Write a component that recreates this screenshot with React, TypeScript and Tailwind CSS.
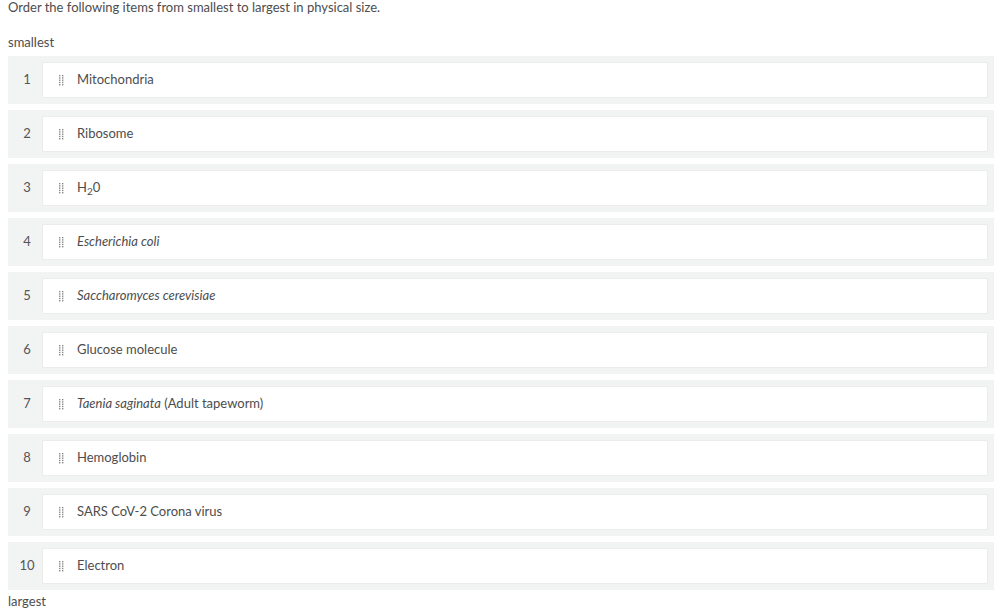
import React from "react";

const Handle = () => (
  <svg width="5" height="11" viewBox="0 0 5 11" className="shrink-0">
    {[0, 1, 2, 3, 4].map((r) =>
      [0, 1].map((c) => (
        <rect key={`${r}-${c}`} x={c * 3} y={r * 2.25} width="1.4" height="1.4" fill="#8a8a8a" />
      ))
    )}
  </svg>
);

const items: React.ReactNode[] = [
  "Mitochondria",
  "Ribosome",
  <span>H<sub className="text-[10px] align-baseline relative top-[3px]">2</sub>0</span>,
  <i>Escherichia coli</i>,
  <i>Saccharomyces cerevisiae</i>,
  "Glucose molecule",
  <span><i>Taenia saginata</i> (Adult tapeworm)</span>,
  "Hemoglobin",
  "SARS CoV-2 Corona virus",
  "Electron",
];

export default function App() {
  return (
    <div className="w-[1003px] h-[615px] bg-white text-[#4d4d4d] text-[13px] overflow-hidden" style={{ fontFamily: "Lato, 'Open Sans', sans-serif" }}>
      <div className="pl-[8px] pr-[9px]">
        <p className="leading-[16px] -mt-[1px]">Order the following items from smallest to largest in physical size.</p>
        <p className="leading-[16px] mt-[19px]">smallest</p>
        <div className="mt-[6px] flex flex-col gap-[6px]">
          {items.map((it, i) => (
            <div key={i} className="h-[48px] bg-[#f2f3f3] flex items-center pr-[6px]">
              <div className="w-[34px] pl-[4px] text-center text-[#555]">{i + 1}</div>
              <div className="flex-1 h-[36px] bg-white border border-[#ebebeb] rounded-[2px] flex items-center pl-[16px] gap-[13px]">
                <Handle />
                <span className="text-[#4d4d4d]">{it}</span>
              </div>
            </div>
          ))}
        </div>
        <p className="leading-[16px] mt-[3px]">largest</p>
      </div>
    </div>
  );
}
